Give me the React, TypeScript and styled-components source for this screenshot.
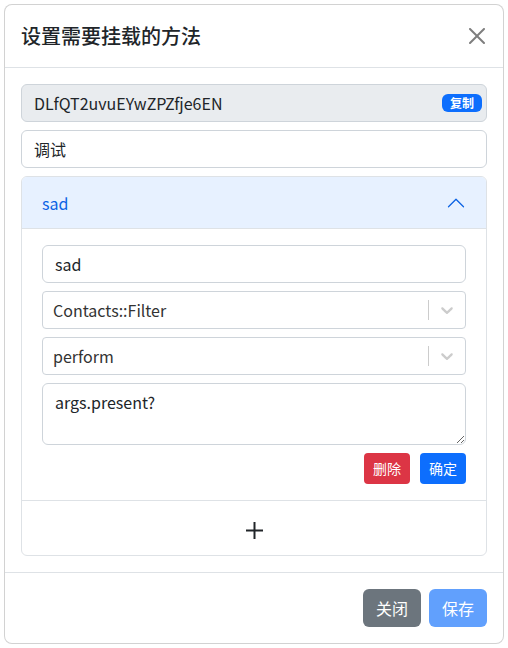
import React from 'react'
import styled, { createGlobalStyle } from 'styled-components'

const GlobalStyle = createGlobalStyle`
  * { box-sizing: border-box; }
  body {
    margin: 0;
    background: #fff;
    color: #212529;
    font-family: "Noto Sans CJK SC", "Noto Sans", sans-serif;
    font-size: 16px;
    line-height: 1.5;
  }
`

const Page = styled.div`
  padding: 4px;
`

const Modal = styled.div`
  width: 500px;
  border: 1px solid rgba(0, 0, 0, 0.175);
  border-radius: 8px;
  background: #fff;
`

const Header = styled.div`
  display: flex;
  align-items: center;
  justify-content: space-between;
  padding: 16px;
  border-bottom: 1px solid #dee2e6;
`

const Title = styled.h5`
  margin: 0;
  font-size: 20px;
  font-weight: 500;
  line-height: 1.5;
`

const CloseButton = styled.button`
  display: flex;
  align-items: center;
  justify-content: center;
  width: 24px;
  height: 24px;
  padding: 4px;
  margin-right: -2px;
  border: 0;
  background: transparent;
  opacity: 0.5;
  color: #000;
`

const Body = styled.div`
  padding: 16px;
  display: flex;
  flex-direction: column;
  gap: 8px;
`

const Field = styled.div`
  position: relative;
`

const Input = styled.input<{ $disabled?: boolean }>`
  display: block;
  width: 100%;
  height: 38px;
  padding: 6px 12px;
  font: inherit;
  color: #212529;
  background: ${p => (p.$disabled ? '#e9ecef' : '#fff')};
  border: 1px solid #ced4da;
  border-radius: 6px;
  outline: none;
`

const Badge = styled.span`
  position: absolute;
  right: 5px;
  top: 50%;
  transform: translateY(-50%);
  padding: 0 8px;
  height: 18px;
  line-height: 18px;
  font-size: 12px;
  font-weight: 700;
  color: #fff;
  background: #0d6efd;
  border-radius: 6px;
`

const Accordion = styled.div`
  border: 1px solid #dee2e6;
  border-radius: 6px;
  overflow: hidden;
`

const AccordionHeader = styled.div`
  display: flex;
  align-items: center;
  justify-content: space-between;
  height: 52px;
  padding: 0 20px;
  background: #e7f1ff;
  color: #0c63e4;
  border-bottom: 1px solid #dee2e6;
`

const AccordionBody = styled.div`
  padding: 16px 20px;
  display: flex;
  flex-direction: column;
  gap: 8px;
  border-bottom: 1px solid #dee2e6;
`

const SelectControl = styled.div`
  display: flex;
  align-items: center;
  height: 38px;
  border: 1px solid #ced4da;
  border-radius: 4px;
  background: #fff;
`

const SelectValue = styled.div`
  flex: 1;
  padding: 2px 10px;
  color: #333;
`

const Separator = styled.span`
  align-self: stretch;
  width: 1px;
  margin: 8px 0;
  background: #ccc;
`

const Indicator = styled.div`
  display: flex;
  padding: 8px;
  color: #ccc;
`

const TextArea = styled.textarea`
  display: block;
  width: 100%;
  height: 62px;
  padding: 6px 12px;
  font: inherit;
  color: #212529;
  border: 1px solid #ced4da;
  border-radius: 6px;
  outline: none;
  resize: vertical;
`

const Actions = styled.div`
  display: flex;
  justify-content: flex-end;
  gap: 10px;
`

const Button = styled.button<{ $variant: 'danger' | 'primary' | 'secondary'; $small?: boolean; $disabled?: boolean }>`
  font-family: inherit;
  font-size: ${p => (p.$small ? '14px' : '16px')};
  line-height: 1.5;
  padding: ${p => (p.$small ? '4px 8px' : '6px 12px')};
  border-radius: ${p => (p.$small ? '4px' : '6px')};
  border: 1px solid transparent;
  color: #fff;
  opacity: ${p => (p.$disabled ? 0.65 : 1)};
  background: ${p =>
    p.$variant === 'danger' ? '#dc3545' : p.$variant === 'primary' ? '#0d6efd' : '#6c757d'};
`

const AddRow = styled.div`
  display: flex;
  align-items: center;
  justify-content: center;
  height: 54px;
  padding-top: 4px;
  color: #212529;
`

const Footer = styled.div`
  display: flex;
  justify-content: flex-end;
  gap: 8px;
  padding: 16px;
  border-top: 1px solid #dee2e6;
`

const Chevron = () => (
  <svg width="20" height="20" viewBox="0 0 20 20" fill="currentColor">
    <path d="M4.516 7.548c0.436-0.446 1.043-0.481 1.576 0l3.908 3.747 3.908-3.747c0.533-0.481 1.141-0.446 1.574 0 0.436 0.445 0.408 1.197 0 1.615-0.406 0.418-4.695 4.502-4.695 4.502-0.217 0.223-0.502 0.335-0.787 0.335s-0.57-0.112-0.789-0.335c0 0-4.287-4.084-4.695-4.502s-0.436-1.17 0-1.615z" />
  </svg>
)

const Select = ({ value }: { value: string }) => (
  <SelectControl>
    <SelectValue>{value}</SelectValue>
    <Separator />
    <Indicator>
      <Chevron />
    </Indicator>
  </SelectControl>
)

const App = () => {
  return (
    <Page>
      <GlobalStyle />
      <Modal>
        <Header>
          <Title>设置需要挂载的方法</Title>
          <CloseButton>
            <svg width="16" height="16" viewBox="0 0 16 16" fill="currentColor">
              <path d="M.293.293a1 1 0 0 1 1.414 0L8 6.586 14.293.293a1 1 0 1 1 1.414 1.414L9.414 8l6.293 6.293a1 1 0 0 1-1.414 1.414L8 9.414l-6.293 6.293a1 1 0 0 1-1.414-1.414L6.586 8 .293 1.707a1 1 0 0 1 0-1.414z" />
            </svg>
          </CloseButton>
        </Header>
        <Body>
          <Field>
            <Input $disabled readOnly value="DLfQT2uvuEYwZPZfje6EN" />
            <Badge>复制</Badge>
          </Field>
          <Input readOnly value="调试" />
          <Accordion>
            <AccordionHeader>
              <span>sad</span>
              <svg width="20" height="20" viewBox="0 0 16 16" fill="#0c63e4" style={{ transform: 'rotate(180deg)' }}>
                <path d="M1.646 4.646a.5.5 0 0 1 .708 0L8 10.293l5.646-5.647a.5.5 0 0 1 .708.708l-6 6a.5.5 0 0 1-.708 0l-6-6a.5.5 0 0 1 0-.708z" />
              </svg>
            </AccordionHeader>
            <AccordionBody>
              <Input readOnly value="sad" />
              <Select value="Contacts::Filter" />
              <Select value="perform" />
              <TextArea readOnly value="args.present?" />
              <Actions>
                <Button $variant="danger" $small>删除</Button>
                <Button $variant="primary" $small>确定</Button>
              </Actions>
            </AccordionBody>
            <AddRow>
              <svg width="17" height="17" viewBox="0 0 17 17" stroke="currentColor" strokeWidth="2">
                <path d="M8.5 0v17M0 8.5h17" />
              </svg>
            </AddRow>
          </Accordion>
        </Body>
        <Footer>
          <Button $variant="secondary">关闭</Button>
          <Button $variant="primary" $disabled>保存</Button>
        </Footer>
      </Modal>
    </Page>
  )
}

export default App
